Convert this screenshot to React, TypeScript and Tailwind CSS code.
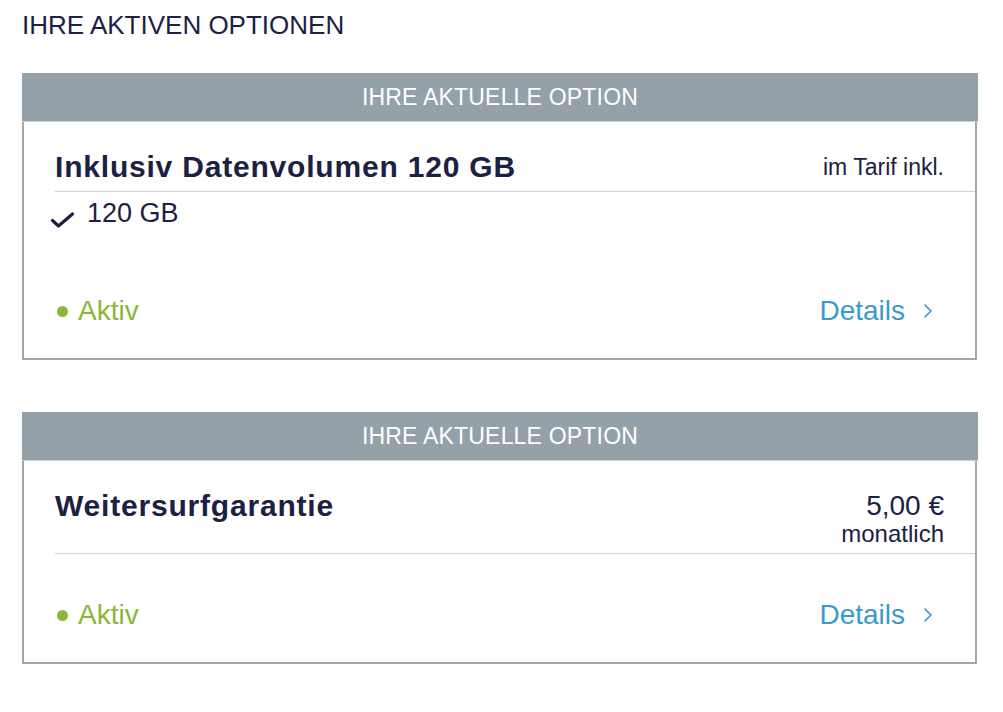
import React from "react";

type Option = {
  title: string;
  price: string;
  priceNote?: string;
  features: string[];
};

const options: Option[] = [
  {
    title: "Inklusiv Datenvolumen 120 GB",
    price: "im Tarif inkl.",
    features: ["120 GB"],
  },
  {
    title: "Weitersurfgarantie",
    price: "5,00 €",
    priceNote: "monatlich",
    features: [],
  },
];

const Check = () => (
  <svg width="25" height="18" viewBox="0 0 25 18" className="shrink-0 mt-[12px]">
    <path
      d="M2.5 10.5 L8.5 16 L22.5 4"
      fill="none"
      stroke="#1c2143"
      strokeWidth="3.2"
      strokeLinecap="round"
      strokeLinejoin="round"
    />
  </svg>
);

const Chevron = () => (
  <svg width="10" height="16" viewBox="0 0 10 16">
    <path d="M2 2 L8 8 L2 14" fill="none" stroke="#3a9bc9" strokeWidth="1.6" strokeLinecap="round" strokeLinejoin="round" />
  </svg>
);

const OptionCard = ({ option }: { option: Option }) => {
  return (
    <div className="w-[956px]">
      <div className="h-[49px] bg-[#95a1a9] border-b border-[#c9d0d4] flex items-center justify-center text-white text-[23px] tracking-[0.2px]">
        IHRE AKTUELLE OPTION
      </div>
      <div className="border-x-2 border-b-2 border-[#a0a8ae] pl-[31px] box-border mr-[1px]">
        <div className="flex justify-between items-start pt-[27px] pb-[6px] pr-[31px]">
          <h2 className="text-[30px] leading-[36px] font-bold tracking-[0.8px] text-[#1c2143]">
            {option.title}
          </h2>
          <div className="flex flex-col items-end text-[#1c2143]">
            <span
              className={
                option.priceNote
                  ? "text-[28px] leading-[30px] mt-[3px]"
                  : "text-[23px] leading-[30px] mt-[3px]"
              }
            >
              {option.price}
            </span>
            {option.priceNote && (
              <span className="text-[24px] leading-[26px]">{option.priceNote}</span>
            )}
          </div>
        </div>
        <div className="h-px bg-[#cfd2d4]" />
        {option.features.length > 0 && (
          <div className="h-[58px] pt-[6px]">
            {option.features.map((f) => (
              <div key={f} className="flex items-start gap-[12px] -ml-[5px]">
                <Check />
                <span className="text-[27px] leading-[30px] text-[#1c2143]">{f}</span>
              </div>
            ))}
          </div>
        )}
        <div className="h-[94px] mt-[14px] flex items-center justify-between pr-[42px]">
          <div className="flex items-center gap-[10px] pl-[2px]">
            <span className="w-[11px] h-[11px] rounded-full bg-[#8ab737]" />
            <span className="text-[28px] text-[#8ab737]">Aktiv</span>
          </div>
          <div className="flex items-center gap-[18px] text-[28px] text-[#3a9bc9]">
            <span>Details</span>
            <Chevron />
          </div>
        </div>
      </div>
    </div>
  );
};

export default function App() {
  return (
    <div className="min-h-screen bg-white pt-[9px] px-[22px] font-['Liberation_Sans',Arial,sans-serif]">
      <h1 className="text-[26px] leading-[32px] text-[#1c2143] mb-[32px]">IHRE AKTIVEN OPTIONEN</h1>
      <div className="flex flex-col gap-[52px]">
        {options.map((o) => (
          <OptionCard key={o.title} option={o} />
        ))}
      </div>
    </div>
  );
}
